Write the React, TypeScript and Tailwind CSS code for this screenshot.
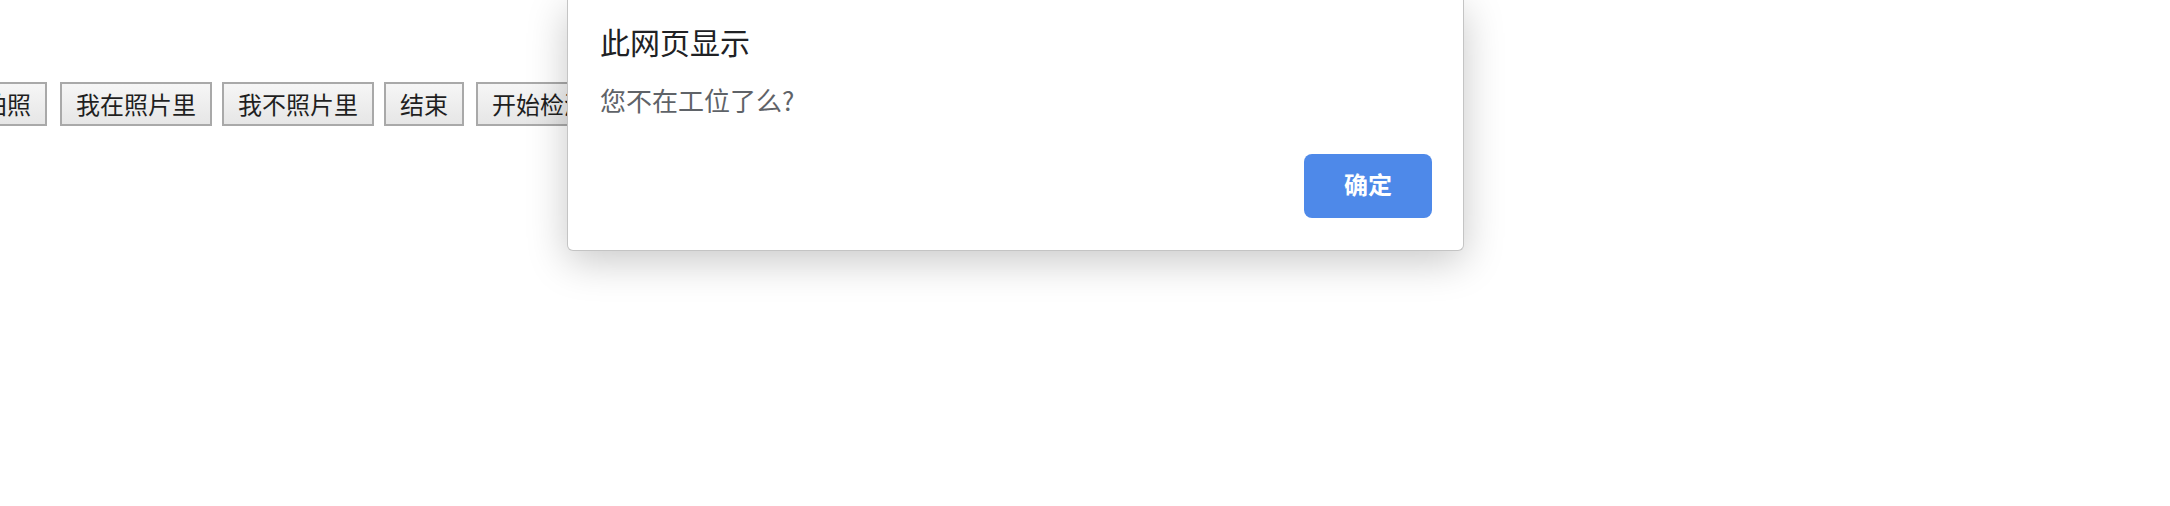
import React from "react";

const btn =
  "h-[44px] shrink-0 border-2 border-[#a9a9a9] bg-gradient-to-b from-[#f6f6f6] to-[#e6e6e6] text-[24px] leading-[28px] text-[#1f1f1f] flex items-center justify-center";

export default function App() {
  return (
    <div
      className="relative w-[2170px] h-[506px] bg-white overflow-hidden"
      style={{ fontFamily: '"Noto Sans CJK SC", "Noto Sans", sans-serif' }}
    >
      <div className="flex pt-[82px] ml-[-33px]">
        <button className={`${btn} w-[80px]`}>拍照</button>
        <button className={`${btn} w-[152px] ml-[13px]`}>我在照片里</button>
        <button className={`${btn} w-[152px] ml-[10px]`}>我不照片里</button>
        <button className={`${btn} w-[80px] ml-[10px]`}>结束</button>
        <button className={`${btn} w-[128px] ml-[12px]`}>开始检测</button>
      </div>

      <div className="absolute left-[567px] top-0 w-[897px] h-[251px] bg-white border border-t-0 border-[#c4c4c4] rounded-b-[6px] shadow-[0_10px_40px_rgba(0,0,0,0.22)] flex flex-col pl-[32px] pr-[31px] pt-[23px]">
        <div className="text-[30px] leading-[36px] text-[#202124]">此网页显示</div>
        <div className="mt-[25px] text-[26px] leading-[32px] text-[#5f6368]">您不在工位了么?</div>
        <div className="mt-[38px] flex justify-end">
          <button className="w-[128px] h-[64px] rounded-[8px] bg-[#4e89e9] text-white text-[24px] font-bold flex items-center justify-center pb-[4px]">
            确定
          </button>
        </div>
      </div>
    </div>
  );
}
